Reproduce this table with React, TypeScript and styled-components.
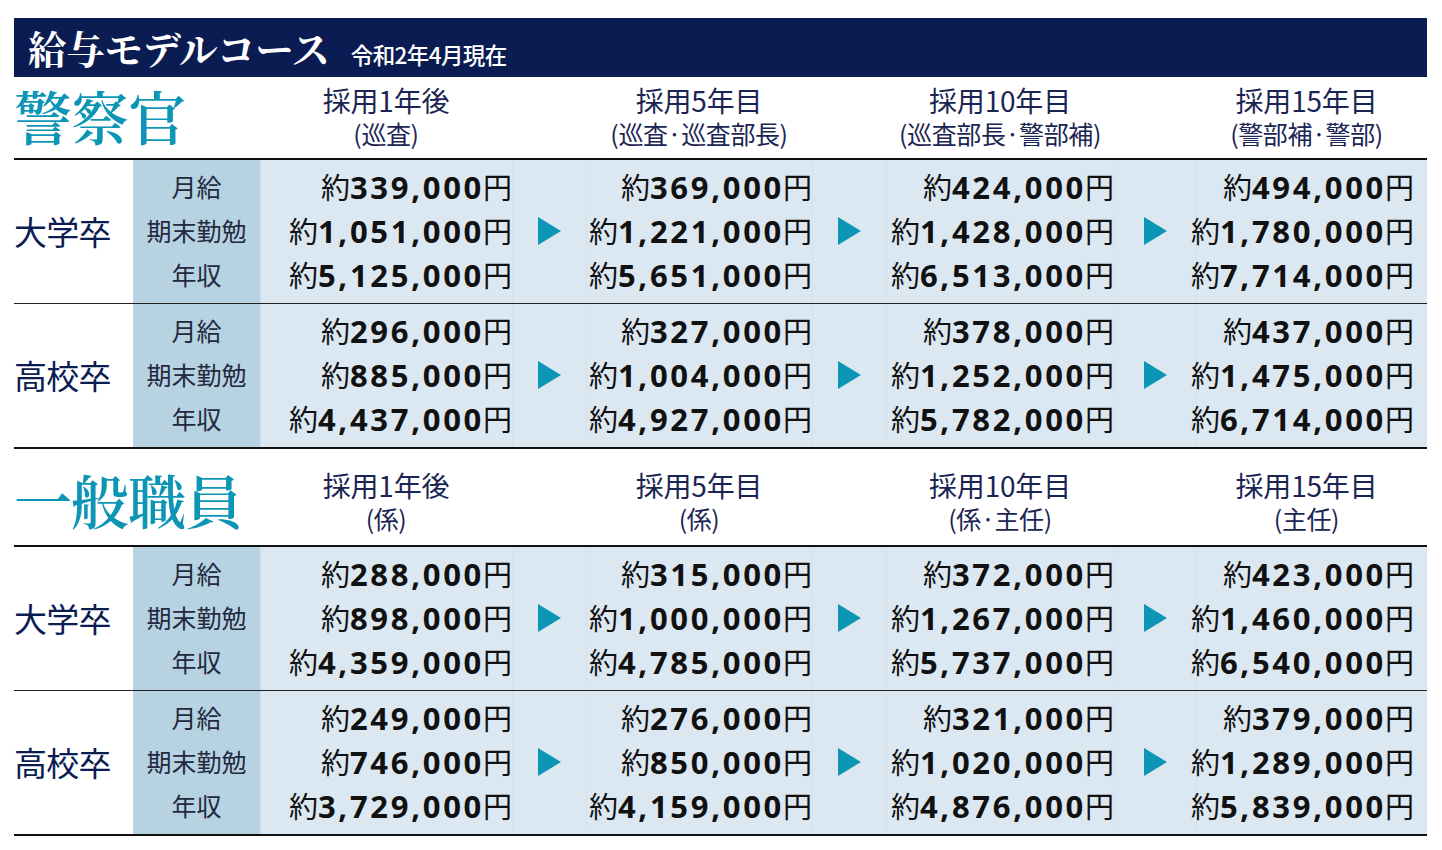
import React from "react";
import styled, { createGlobalStyle } from "styled-components";

const GlobalStyle = createGlobalStyle`
  html, body { margin: 0; padding: 0; background: #ffffff; }
  body { font-family: "Noto Sans CJK JP", "Noto Sans", sans-serif; }
`;

const NAVY = "#0b1c52";
const TEAL = "#0d95b5";
const COLS = "119px 127px 252px 74px 226px 74px 228px 82px 231px";

const Page = styled.div`
  padding: 18px 0 0 14px;
  width: 1413px;
`;

const TitleBar = styled.div`
  display: flex;
  align-items: baseline;
  gap: 21px;
  height: 59px;
  box-sizing: border-box;
  padding: 0 0 0 14px;
  background: ${NAVY};
  color: #ffffff;
`;

const Title = styled.h1`
  margin: 0;
  font-family: "Noto Serif CJK JP", "Noto Sans CJK JP", serif;
  font-weight: 700;
  font-size: 38.5px;
  line-height: 59px;
  letter-spacing: -0.3px;
`;

const Subtitle = styled.span`
  font-family: "Noto Sans CJK JP", sans-serif;
  font-size: 22.5px;
  font-weight: 500;
  letter-spacing: -0.6px;
`;

const Section = styled.section`
  border-bottom: 2px solid #111;
`;

const HeaderRow = styled.div<{ $height: number; $offset: number }>`
  display: grid;
  grid-template-columns: ${COLS};
  height: ${(p) => p.$height}px;
  box-sizing: border-box;
  padding-top: ${(p) => p.$offset}px;
  border-bottom: 2px solid #111;
  align-items: center;
`;

const SectionTitle = styled.div`
  grid-column: 1 / 3;
  font-family: "Noto Serif CJK JP", "Noto Sans CJK JP", serif;
  font-size: 58px;
  font-weight: 600;
  color: ${TEAL};
  line-height: 1;
  letter-spacing: -1px;
  white-space: nowrap;
  padding-bottom: 6px;
`;

const ColHeader = styled.div<{ $shift?: number }>`
  display: flex;
  flex-direction: column;
  align-items: center;
  gap: 7px;
  color: #1b2553;
  padding-right: ${(p) => p.$shift ?? 0}px;
  padding-bottom: 3px;
`;

const ColHeaderMain = styled.span`
  font-size: 28px;
  line-height: 28px;
  letter-spacing: -0.2px;
`;

const ColHeaderSub = styled.span`
  font-size: 25px;
  line-height: 25px;
  white-space: nowrap;
  letter-spacing: -0.4px;
`;

const Spacer = styled.div``;

const DataRow = styled.div<{ $last?: boolean }>`
  display: grid;
  grid-template-columns: ${COLS};
  height: 143px;
  border-bottom: ${(p) => (p.$last ? "none" : "1px solid #222")};
`;

const EduLabel = styled.div`
  display: flex;
  align-items: center;
  font-size: 33px;
  color: ${NAVY};
  letter-spacing: -0.8px;
  background: #ffffff;
  padding-bottom: 2px;
`;

const Category = styled.div`
  display: flex;
  flex-direction: column;
  align-items: center;
  padding-top: 4px;
  background: #b7d3e1;
`;

const CategoryItem = styled.div`
  height: 44px;
  line-height: 44px;
  font-size: 25px;
  color: #232a40;
`;

const ValueCell = styled.div<{ $pad?: number }>`
  display: flex;
  flex-direction: column;
  align-items: flex-end;
  padding-top: 4px;
  padding-right: ${(p) => p.$pad ?? 0}px;
  background: #dce8f1;
  border-left: 1px solid #d4e2ec;
`;

const ValueLine = styled.div`
  display: flex;
  align-items: baseline;
  height: 44px;
  line-height: 44px;
  color: #111111;
  white-space: nowrap;
`;

const Kanji = styled.span`
  font-family: "Noto Sans CJK JP", sans-serif;
  font-size: 29px;
  font-weight: 400;
`;

const Amount = styled.span`
  font-family: "Open Sans", "Noto Sans", sans-serif;
  font-size: 31px;
  font-weight: 700;
  letter-spacing: 2.7px;
  margin-right: -1px;
`;

const ArrowCell = styled.div`
  display: flex;
  align-items: center;
  justify-content: center;
  background: #dce8f1;
  border-left: 1px solid #d4e2ec;
  padding-bottom: 2px;
`;

const Arrow = styled.div`
  width: 0;
  height: 0;
  border-left: 23px solid ${TEAL};
  border-top: 14.5px solid transparent;
  border-bottom: 14.5px solid transparent;
`;

type Row = { edu: string; values: [string, string, string][] };
type SectionData = {
  title: string;
  headerHeight: number;
  offset: number;
  headers: [string, string][];
  rows: Row[];
};

const sections: SectionData[] = [
  {
    title: "警察官",
    headerHeight: 83,
    offset: 0,
    headers: [
      ["採用1年後", "(巡査)"],
      ["採用5年目", "(巡査·巡査部長)"],
      ["採用10年目", "(巡査部長·警部補)"],
      ["採用15年目", "(警部補·警部)"],
    ],
    rows: [
      {
        edu: "大学卒",
        values: [
          ["339,000", "1,051,000", "5,125,000"],
          ["369,000", "1,221,000", "5,651,000"],
          ["424,000", "1,428,000", "6,513,000"],
          ["494,000", "1,780,000", "7,714,000"],
        ],
      },
      {
        edu: "高校卒",
        values: [
          ["296,000", "885,000", "4,437,000"],
          ["327,000", "1,004,000", "4,927,000"],
          ["378,000", "1,252,000", "5,782,000"],
          ["437,000", "1,475,000", "6,714,000"],
        ],
      },
    ],
  },
  {
    title: "一般職員",
    headerHeight: 98,
    offset: 10,
    headers: [
      ["採用1年後", "(係)"],
      ["採用5年目", "(係)"],
      ["採用10年目", "(係·主任)"],
      ["採用15年目", "(主任)"],
    ],
    rows: [
      {
        edu: "大学卒",
        values: [
          ["288,000", "898,000", "4,359,000"],
          ["315,000", "1,000,000", "4,785,000"],
          ["372,000", "1,267,000", "5,737,000"],
          ["423,000", "1,460,000", "6,540,000"],
        ],
      },
      {
        edu: "高校卒",
        values: [
          ["249,000", "746,000", "3,729,000"],
          ["276,000", "850,000", "4,159,000"],
          ["321,000", "1,020,000", "4,876,000"],
          ["379,000", "1,289,000", "5,839,000"],
        ],
      },
    ],
  },
];

const categories = ["月給", "期末勤勉", "年収"];
const valuePads = [0, 0, 0, 13];
const headerShift = [0, 0, 0, 10];

const Values: React.FC<{ vals: [string, string, string]; pad: number }> = ({ vals, pad }) => (
  <ValueCell $pad={pad}>
    {vals.map((v, i) => (
      <ValueLine key={i}>
        <Kanji>約</Kanji>
        <Amount>{v}</Amount>
        <Kanji>円</Kanji>
      </ValueLine>
    ))}
  </ValueCell>
);

const SalarySection: React.FC<{ data: SectionData }> = ({ data }) => (
  <Section>
    <HeaderRow $height={data.headerHeight} $offset={data.offset}>
      <SectionTitle>{data.title}</SectionTitle>
      {data.headers.map(([main, sub], i) => (
        <React.Fragment key={i}>
          {i > 0 && <Spacer />}
          <ColHeader $shift={headerShift[i]}>
            <ColHeaderMain>{main}</ColHeaderMain>
            <ColHeaderSub>{sub}</ColHeaderSub>
          </ColHeader>
        </React.Fragment>
      ))}
    </HeaderRow>
    {data.rows.map((row, ri) => (
      <DataRow key={ri} $last={ri === data.rows.length - 1}>
        <EduLabel>{row.edu}</EduLabel>
        <Category>
          {categories.map((c) => (
            <CategoryItem key={c}>{c}</CategoryItem>
          ))}
        </Category>
        {row.values.map((vals, ci) => (
          <React.Fragment key={ci}>
            {ci > 0 && (
              <ArrowCell>
                <Arrow />
              </ArrowCell>
            )}
            <Values vals={vals} pad={valuePads[ci]} />
          </React.Fragment>
        ))}
      </DataRow>
    ))}
  </Section>
);

export default function App() {
  return (
    <>
      <GlobalStyle />
      <Page>
        <TitleBar>
          <Title>給与モデルコース</Title>
          <Subtitle>令和2年4月現在</Subtitle>
        </TitleBar>
        {sections.map((s) => (
          <SalarySection key={s.title} data={s} />
        ))}
      </Page>
    </>
  );
}
